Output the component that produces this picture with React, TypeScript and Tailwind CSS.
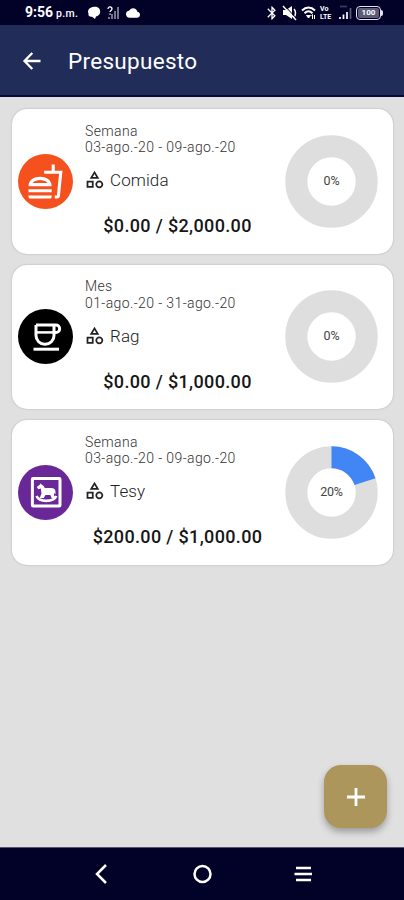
import { MdBluetooth, MdCloud, MdOutlineCategory, MdOutlineFastfood } from 'react-icons/md'

const CupIcon = () => (
  <svg className="w-[54px] h-[54px]" viewBox="0 0 54 54" fill="none" stroke="white" strokeWidth="3">
    <path d="M17 15h20a3.6 3.6 0 0 1 3.6 3.6v.4a3.6 3.6 0 0 1-3.6 3.6h-2M17 15v10.500a8.800 8.800 0 0 0 8.800 8.800h.4a8.800 8.800 0 0 0 8.800-8.800V15" strokeLinejoin="round" />
    <path d="M17 22.4h18" strokeWidth="2.5" />
    <path d="M14.5 39.2h25.5" />
  </svg>
)

const HorseIcon = () => (
  <svg className="w-[54px] h-[54px]" viewBox="0 0 54 54">
    <rect x="13.4" y="13.4" width="27.6" height="27.6" rx="0.8" fill="none" stroke="white" strokeWidth="3" />
    <path
      d="M17.8 22l3.2-2.5.8-1.3.9 1.5c1.5.5 2.5 1.6 3 3.300h6.300c3 0 4.500 1.500 4.500 4v2.200l-1.500-1.200v2.500l1.700 2.500h-4l-1.500-3h-4.700l-1.800 3h-4l1.800-4.500-.7-5-2.500.8z"
      fill="white"
    />
    <path d="M17.5 31c1.500 3.400 4.800 4.800 9.700 4.800s8.600-1.400 10.100-4.800" fill="none" stroke="white" strokeWidth="2.700" />
  </svg>
)

const budgets = [
  {
    name: 'Comida',
    period: 'Semana',
    range: '03-ago.-20 - 09-ago.-20',
    amount: '$0.00 / $2,000.00',
    percent: 0,
    color: 'bg-[#f4511e]',
    icon: <MdOutlineFastfood className="w-[37px] h-[37px] text-white" />
  },
  {
    name: 'Rag',
    period: 'Mes',
    range: '01-ago.-20 - 31-ago.-20',
    amount: '$0.00 / $1,000.00',
    percent: 0,
    color: 'bg-black',
    icon: <CupIcon />
  },
  {
    name: 'Tesy',
    period: 'Semana',
    range: '03-ago.-20 - 09-ago.-20',
    amount: '$200.00 / $1,000.00',
    percent: 20,
    color: 'bg-[#6a2797]',
    icon: <HorseIcon />
  }
]

const Donut = ({ percent }: { percent: number }) => (
  <div className="relative w-[93px] h-[93px] shrink-0 flex items-center justify-center">
    <svg className="absolute inset-0 -rotate-90" viewBox="0 0 93 93" fill="none" strokeWidth="22">
      <circle cx="46.5" cy="46.5" r="35.2" stroke="#dedede" />
      {percent > 0 && (
        <circle cx="46.5" cy="46.5" r="35.2" stroke="#4285f4" pathLength="100" strokeDasharray={`${percent} 100`} />
      )}
    </svg>
    <span className="relative text-[12.5px] tracking-[-0.2px] text-[#444]">{percent}%</span>
  </div>
)

const StatusBar = () => (
  <div className="h-[25px] shrink-0 bg-[#020229] pl-[25px] pr-[21px] flex items-center justify-between text-white">
    <div className="flex items-center">
      <span className="text-[14px] font-bold">9:56</span>
      <span className="text-[10.5px] font-medium ml-[3px] mt-[3px] tracking-[0.3px]">p.m.</span>
      <svg className="w-[14px] h-[14px] ml-[9px]" viewBox="0 0 14 14" fill="white">
        <path d="M6 1c5-1 8 2 7 6-.5 2-2 3-4 3.500L8 13l-3-2.300C2 11 1 9 1.500 7.500 0 5 2 1.500 6 1z" />
      </svg>
      <svg className="w-[13px] h-[14px] ml-[6px]" viewBox="0 0 13 14" fill="none">
        <path d="M2 13V11M5 13V8M8 13V5M11 13V1" stroke="#73738c" strokeWidth="2" />
        <path d="M1 3c0-3 4-2.500 4 0 0 1.500-2 1.500-2 3M3 7.500v1.300" stroke="white" strokeWidth="1.300" />
      </svg>
      <MdCloud className="w-[16px] h-[14px] ml-[5px]" />
    </div>
    <div className="flex items-center">
      <MdBluetooth className="w-[16px] h-[16px]" />
      <svg className="w-[16px] h-[16px] ml-[2px]" viewBox="0 0 16 16" fill="white">
        <path d="M1 5h3l6-4v13l-6-4H1z" />
        <path d="M12 4c2 2 2 6 0 8M1 1l13 14" fill="none" stroke="white" strokeWidth="1.5" />
        <path d="M2.5.5l13 14" stroke="#020229" strokeWidth="1" />
      </svg>
      <svg className="w-[15px] h-[14px] ml-[3px]" viewBox="0 0 15 14" fill="none" stroke="white">
        <path d="M1 4.500c4-4 9-4 13 0M3.500 7.200c2.500-2.500 5.500-2.500 8 0" strokeWidth="2" />
        <path d="M5.500 9.500h4L7.500 12z" fill="white" />
        <path d="M11.500 13V8.500l-1 1M13.500 9v4" strokeWidth="1" />
      </svg>
      <div className="ml-[4px] w-[14px] flex flex-col text-[7px] leading-[8px] font-bold">
        <span>Vo</span>
        <span>LTE</span>
      </div>
      <svg className="w-[13px] h-[17px] ml-[5px]" viewBox="0 0 13 17" fill="none" strokeWidth="1.7">
        <path d="M1 15v-2M4.5 15v-4.5M8 15V8" stroke="white" />
        <path d="M11.5 15V4" stroke="#5c5c7a" />
        <path d="M1 2.5h7" stroke="#3c3c5f" />
      </svg>
      <div className="ml-[4px] w-[27px] h-[14px] flex items-center">
        <div className="w-[25px] h-[14px] rounded-[4px] border-[1.5px] border-[#e4e4ee] p-[1px]">
          <div className="h-full rounded-[2px] bg-[#5c5c78] flex items-center justify-center text-[8px] leading-none font-bold">100</div>
        </div>
        <div className="w-[2px] h-[6px] rounded-r bg-[#e4e4ee]" />
      </div>
    </div>
  </div>
)

const App = () => {
  return (
    <div className="w-[404px] h-[900px] flex flex-col overflow-hidden bg-[#e0e0e0] font-[Roboto,sans-serif]">
      <StatusBar />

      <header className="h-[72px] shrink-0 bg-[#222c58] border-b-2 border-[#08093a] pl-[20px] flex items-center text-white">
        <svg className="w-[24px] h-[24px] mt-[2px]" viewBox="0 0 24 24" fill="none" stroke="currentColor" strokeWidth="2.3">
          <path d="M20.500 12H5M12.300 4L4.500 12l7.800 8" />
        </svg>
        <h1 className="ml-[24px] mt-[4px] text-[22.5px] tracking-[0.3px]">Presupuesto</h1>
      </header>

      <main className="flex-1 pl-[12px] pr-[11px] pt-[12px] flex flex-col gap-[11px]">
        {budgets.map((budget) => (
          <div
            key={budget.name}
            className="h-[144.5px] shrink-0 rounded-[15px] bg-white pl-[6px] pr-[15px] flex items-center shadow-[0_0_2px_rgba(0,0,0,0.25)]"
          >
            <div className={`w-[55px] h-[55px] shrink-0 rounded-full flex items-center justify-center ${budget.color}`}>
              {budget.icon}
            </div>
            <div className="ml-[12px] flex-1 h-full pt-[13.5px] flex flex-col whitespace-nowrap">
              <div className="text-[14px] leading-[16.5px] tracking-[0.38px] font-light text-[#333]">
                <p>{budget.period}</p>
                <p>{budget.range}</p>
              </div>
              <div className="mt-[13.5px] h-[24px] flex items-center text-[#222]">
                <MdOutlineCategory className="w-[21px] h-[21px] -ml-px -mt-[3px]" />
                <span className="ml-[5px] text-[17px] tracking-[0.1px] font-light">{budget.name}</span>
              </div>
              <p className="mt-[21px] mr-[15px] h-[24px] text-[18px] leading-[24px] tracking-[0.35px] font-medium text-[#161616] text-center">
                {budget.amount}
              </p>
            </div>
            <Donut percent={budget.percent} />
          </div>
        ))}
      </main>

      <div className="shrink-0 pr-[17px] pb-[19px] flex justify-end">
        <button className="w-[63px] h-[63px] rounded-[17px] bg-[#ad965b] flex items-center justify-center shadow-[0_4px_7px_rgba(0,0,0,0.3)]">
          <svg className="w-[18px] h-[18px]" viewBox="0 0 18 18" stroke="white" strokeWidth="2.8">
            <path d="M9 0v18M0 9h18" />
          </svg>
        </button>
      </div>

      <nav className="h-[53px] shrink-0 bg-[#020229] border-t border-[#555575] flex items-center justify-center">
        <svg className="w-[220px] h-[24px]" viewBox="0 0 220 24" fill="none" stroke="white" strokeWidth="2.5">
          <path d="M14 3L5 12l9 9" />
          <circle cx="110.5" cy="12" r="8" />
          <path d="M204 6h15M202.500 12h17.500M204 18h15" />
        </svg>
      </nav>
    </div>
  )
}

export default App
